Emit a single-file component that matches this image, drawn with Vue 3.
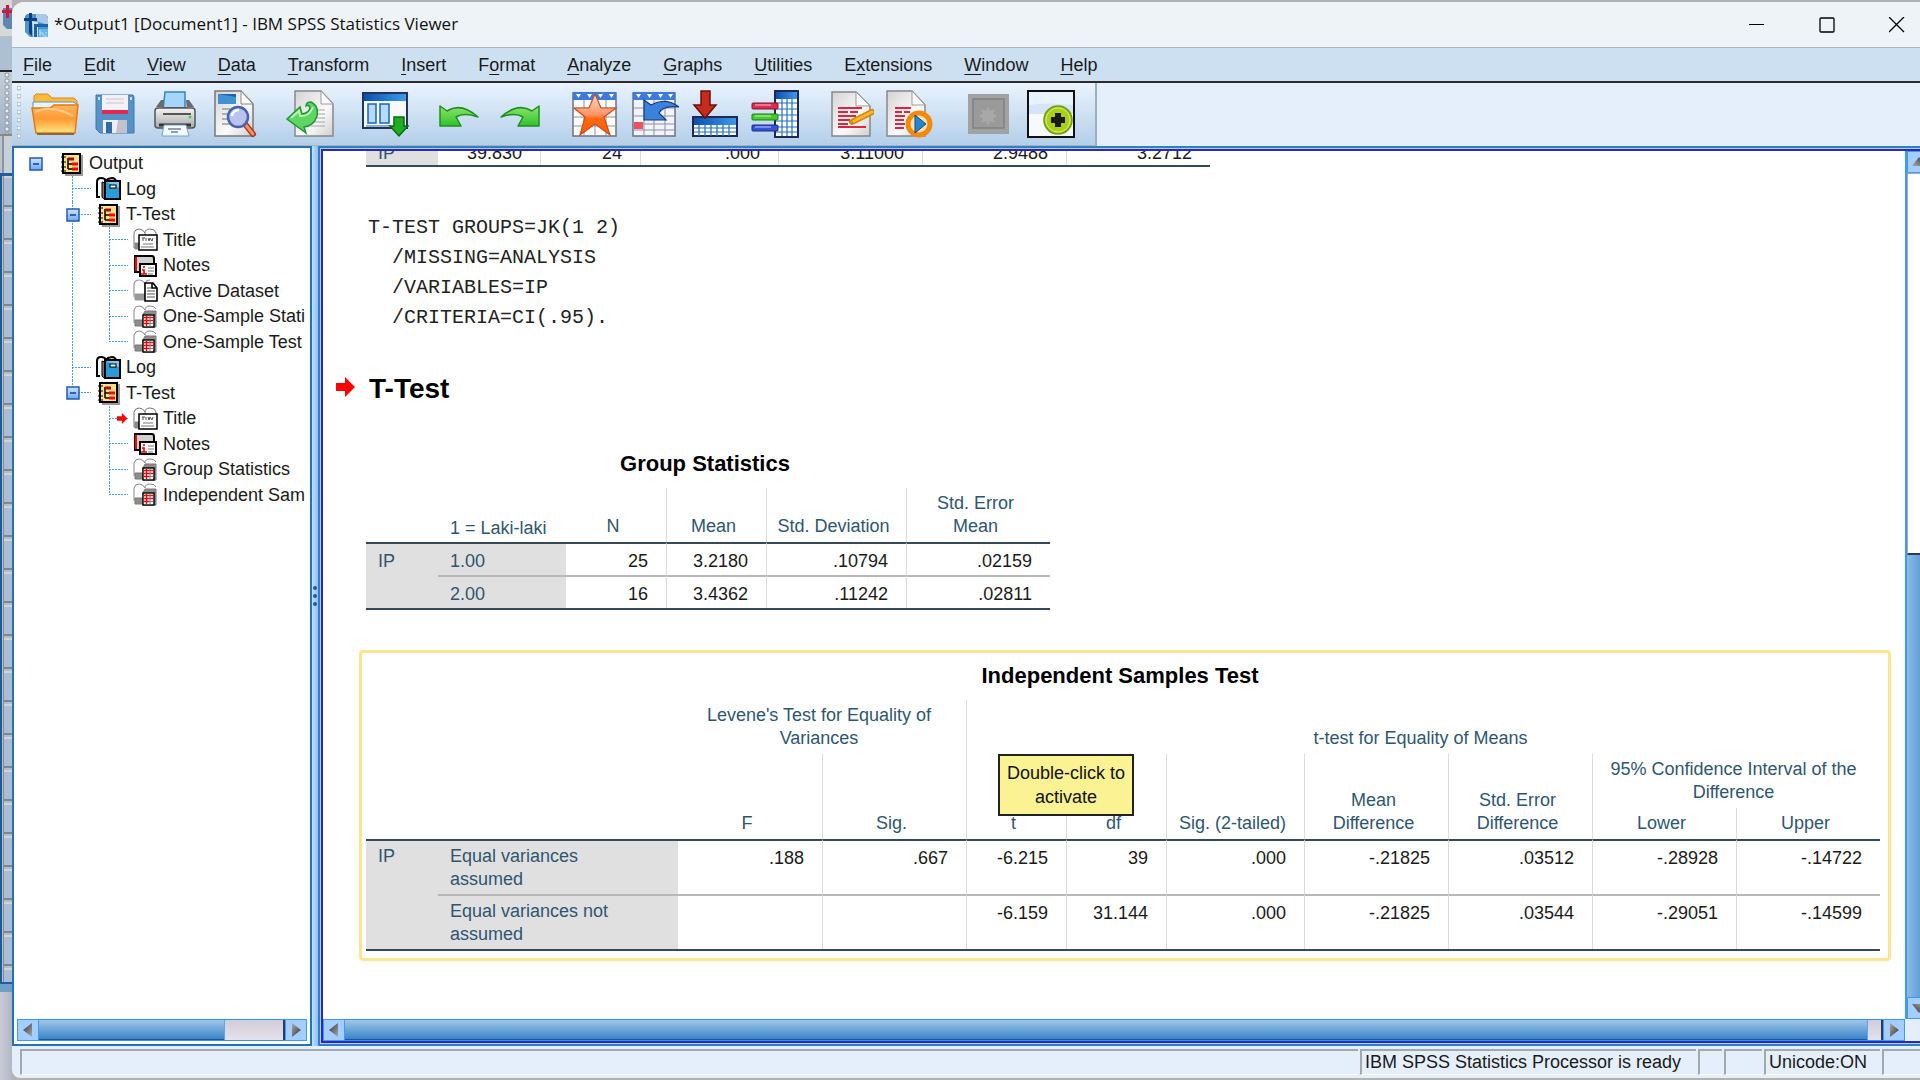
<script setup>
import { ref } from 'vue';

const menus = ref([
  { before: '', key: 'F', after: 'ile' },
  { before: '', key: 'E', after: 'dit' },
  { before: '', key: 'V', after: 'iew' },
  { before: '', key: 'D', after: 'ata' },
  { before: '', key: 'T', after: 'ransform' },
  { before: '', key: 'I', after: 'nsert' },
  { before: 'F', key: 'o', after: 'rmat' },
  { before: '', key: 'A', after: 'nalyze' },
  { before: '', key: 'G', after: 'raphs' },
  { before: '', key: 'U', after: 'tilities' },
  { before: 'E', key: 'x', after: 'tensions' },
  { before: '', key: 'W', after: 'indow' },
  { before: '', key: 'H', after: 'elp' }
]);

// guides: one entry per indent column, drawn left to right
const tree = ref([
  { label: 'Output', icon: 'book', guides: ['root'] },
  { label: 'Log', icon: 'log', guides: ['blank', 'tee'] },
  { label: 'T-Test', icon: 'book', guides: ['blank', 'toggle'] },
  { label: 'Title', icon: 'title', guides: ['blank', 'line', 'tee'] },
  { label: 'Notes', icon: 'notes', guides: ['blank', 'line', 'tee'] },
  { label: 'Active Dataset', icon: 'dataset', guides: ['blank', 'line', 'tee'] },
  { label: 'One-Sample Statistics', icon: 'grid', guides: ['blank', 'line', 'tee'] },
  { label: 'One-Sample Test', icon: 'grid', guides: ['blank', 'line', 'corner'] },
  { label: 'Log', icon: 'log', guides: ['blank', 'tee'] },
  { label: 'T-Test', icon: 'book', guides: ['blank', 'toggle last'] },
  { label: 'Title', icon: 'title', guides: ['blank', 'blank', 'tee current'] },
  { label: 'Notes', icon: 'notes', guides: ['blank', 'blank', 'tee'] },
  { label: 'Group Statistics', icon: 'grid', guides: ['blank', 'blank', 'tee'] },
  { label: 'Independent Samples Test', icon: 'grid', guides: ['blank', 'blank', 'corner'] }
]);

const oneSample = ref(['39.830', '24', '.000', '3.11000', '2.9488', '3.2712']);

const groupRows = ref([
  { group: '1.00', values: ['25', '3.2180', '.10794', '.02159'] },
  { group: '2.00', values: ['16', '3.4362', '.11242', '.02811'] }
]);

const testRows = ref([
  {
    label: 'Equal variances assumed',
    values: ['.188', '.667', '-6.215', '39', '.000', '-.21825', '.03512', '-.28928', '-.14722']
  },
  {
    label: 'Equal variances not assumed',
    values: ['', '', '-6.159', '31.144', '.000', '-.21825', '.03544', '-.29051', '-.14599']
  }
]);

const syntax = `T-TEST GROUPS=JK(1 2)
  /MISSING=ANALYSIS
  /VARIABLES=IP
  /CRITERIA=CI(.95).`;
</script>

<template>
  <div class="desktop">
    <svg class="defs" width="0" height="0" aria-hidden="true">
      <defs>
        <linearGradient id="g-folder" x1="0" y1="0" x2="0" y2="1">
          <stop offset="0" stop-color="#ffb65c" />
          <stop offset="0.5" stop-color="#ff9a33" />
          <stop offset="1" stop-color="#ffe680" />
        </linearGradient>
        <linearGradient id="g-paper" x1="0" y1="0" x2="1" y2="1">
          <stop offset="0" stop-color="#d4d4d4" />
          <stop offset="0.6" stop-color="#fafafa" />
          <stop offset="1" stop-color="#cfcfcf" />
        </linearGradient>
        <linearGradient id="g-blue" x1="0" y1="0" x2="1" y2="0">
          <stop offset="0" stop-color="#0a4fae" />
          <stop offset="1" stop-color="#3d9be8" />
        </linearGradient>
        <linearGradient id="g-green" x1="0" y1="0" x2="0" y2="1">
          <stop offset="0" stop-color="#8fe56b" />
          <stop offset="1" stop-color="#2fc32c" />
        </linearGradient>
        <linearGradient id="g-star" x1="0" y1="0" x2="0" y2="1">
          <stop offset="0" stop-color="#ffe0cc" />
          <stop offset="0.5" stop-color="#ff9566" />
          <stop offset="0.6" stop-color="#ff6a10" />
          <stop offset="1" stop-color="#ff5a00" />
        </linearGradient>
        <linearGradient id="g-toggle" x1="0" y1="0" x2="0" y2="1">
          <stop offset="0" stop-color="#cfe4ff" />
          <stop offset="1" stop-color="#6aaaf0" />
        </linearGradient>
        <linearGradient id="g-printer" x1="0" y1="0" x2="0" y2="1">
          <stop offset="0" stop-color="#f4f4f4" />
          <stop offset="1" stop-color="#a9a9a9" />
        </linearGradient>
        <linearGradient id="g-arrow" x1="0" y1="0" x2="1" y2="1">
          <stop offset="0" stop-color="#333" />
          <stop offset="1" stop-color="#aaa" />
        </linearGradient>
      </defs>
      <symbol id="book" viewBox="0 0 26 24">
        <path d="M6 23h17V3" fill="none" stroke="#9a9a9a" stroke-width="2" />
        <rect x="4" y="2" width="17" height="19" fill="#ffe08a" stroke="#000" stroke-width="2" />
        <path d="M2 5h5M2 10h5M2 15h5M2 19h5" stroke="#000" stroke-width="1" />
        <path d="M9 6v11M9 12h4M9 17h4" fill="none" stroke="#000" stroke-width="1.5" />
        <path d="M9 7h6" stroke="#a01010" stroke-width="3" />
        <path d="M13 12h6M13 17h6" stroke="#f00" stroke-width="3" />
      </symbol>
      <symbol id="log" viewBox="0 0 26 24">
        <path d="M4 20H1V5q0-4 4-4t5 3l2-2 4-1q3 0 4 3" fill="#fff" stroke="#000" stroke-width="2" />
        <path d="M6 5v15q1 2 3 2V6z" fill="#777" stroke="#000" />
        <rect x="9" y="4" width="15" height="18" fill="#2a9bd6" stroke="#000" stroke-width="2" />
        <path d="M10 5h13v6z" fill="#7cc8ee" />
        <rect x="14" y="8" width="6" height="3" fill="#fff" stroke="#000" />
      </symbol>
      <symbol id="title" viewBox="0 0 26 24">
        <path d="M3 20H1V5q1-4 5-4t6 4q0-4 5-4t6 4v3" fill="#fff" stroke="#777" stroke-width="1" />
        <path d="M2 15h4v6H2zM12 5v3" fill="#888" stroke="#888" />
        <rect x="6" y="7" width="18" height="15" fill="#fff" stroke="#000" stroke-width="1.5" />
        <path d="M9 10h3M10 10v3M13 10v3M15 10l1 3 1-3 2 3 1-3" fill="none" stroke="#555" />
        <path d="M10 16h10M8 19h13" stroke="#777" stroke-width="1.2" />
      </symbol>
      <symbol id="notes" viewBox="0 0 26 24">
        <path d="M2 19V2h17q2 0 2 3v7" fill="#d0d0d0" stroke="#000" stroke-width="2" />
        <path d="M3 3v14" stroke="#f00" stroke-width="2" />
        <path d="M2 18h5" stroke="#000" stroke-width="2" />
        <rect x="7" y="10" width="16" height="12" fill="#fff" stroke="#000" stroke-width="2" />
        <path d="M11 12v2M9 16h2v4M8 20h6" fill="none" stroke="#e00" stroke-width="1.6" />
        <path d="M15 14h6M15 17h6M15 20h5" stroke="#777" />
      </symbol>
      <symbol id="dataset" viewBox="0 0 26 24">
        <path d="M1 18V5q1-4 5-4t6 4q1-4 5-4" fill="#fff" stroke="#999" stroke-width="1.2" />
        <path d="M2 15h10v6H2zM12 4v6" fill="#999" stroke="#999" />
        <path d="M12 4h8l4 5v13H12z" fill="#fff" stroke="#000" stroke-width="1.6" />
        <path d="M19 4v5h5" fill="none" stroke="#000" stroke-width="1.6" />
        <path d="M14 9h4M14 12h8M14 15h8M14 18h8" stroke="#555" />
      </symbol>
      <symbol id="grid" viewBox="0 0 26 24">
        <path d="M1 18V5q1-4 5-4t6 4q0-4 5-4t6 3" fill="#fff" stroke="#888" />
        <path d="M2 15h8v6H2zM12 6h11v16H10V10z" fill="#8d8d8d" stroke="#777" />
        <rect x="10" y="10" width="11" height="12" fill="#fff" stroke="#000" stroke-width="1.4" />
        <path d="M11 12.500h9M11 15.500h9M11 18.500h5M13.500 11v10" stroke="#f00" stroke-width="1.4" />
        <path d="M17 11v10M16 18.500h4" stroke="#777" />
      </symbol>
      <symbol id="arrow" viewBox="0 0 20 20">
        <path d="M0 6h9V0l10 10-10 10v-6H0z" fill="#f00" />
      </symbol>
      <symbol id="tri" viewBox="0 0 12 14">
        <path d="M10 0v14L1 7z" fill="url(#g-arrow)" />
      </symbol>
    </svg>

    <!-- sliver of the data editor behind this window -->
    <div class="behind">
      <div class="behind-title">
        <svg viewBox="0 0 12 36">
          <path d="M3 8h9v21H7l-4-4z" fill="#5b88b5" />
          <path d="M2 10h10v3H2zM6 5h3v13H6z" fill="#d3143c" />
        </svg>
      </div>
      <div class="behind-menu"></div>
      <div class="behind-tools"></div>
      <div class="behind-input"></div>
      <div class="behind-rows"></div>
      <div class="behind-bar"></div>
      <div class="behind-foot"></div>
    </div>

    <div class="window">
      <header class="titlebar">
        <svg class="app-icon" viewBox="0 0 24 24" aria-hidden="true">
          <path d="M3 1h18l3 3v20H6L1 19V3z" fill="#4f93cc" />
          <path d="M12 1h9l3 4v7L12 8z" fill="#a9c9e6" />
          <path d="M5 0h3v5h5v3H8v15l-3-3V8H0V5h5z" fill="#0c3f83" />
          <path d="M8 8l6 1v15H9z" fill="#cfe2f2" />
          <path d="M10 11h14v3H13v10h-3z" fill="#1d63a8" />
          <path d="M15 16h9v8h-9z" fill="#66b6ee" />
          <path d="M16 17v6M16 20h3v3M21 20h2M20 23h3" fill="none" stroke="#bfe2fa" />
        </svg>
        <h1>*Output1 [Document1] - IBM SPSS Statistics Viewer</h1>
        <div class="window-buttons">
          <button aria-label="Minimize">
            <svg viewBox="0 0 16 16"><path d="M0 7.500h15" stroke="#000" /></svg>
          </button>
          <button aria-label="Maximize">
            <svg viewBox="0 0 16 16">
              <rect x="1" y="1" width="14" height="14" rx="1" fill="none" stroke="#000" stroke-width="1.3" />
            </svg>
          </button>
          <button aria-label="Close">
            <svg viewBox="0 0 16 16"><path d="M0 0l15 15M15 0L0 15" stroke="#000" stroke-width="1.3" /></svg>
          </button>
        </div>
      </header>

      <nav class="menubar">
        <button v-for="(menu, index) in menus" :key="index">{{ menu.before }}<u>{{ menu.key }}</u>{{ menu.after }}</button>
      </nav>

      <div class="toolbar-row">
        <div class="toolbar">
          <div class="grip"></div>
          <div class="group">
            <button aria-label="Open">
              <svg viewBox="0 0 48 48">
                <path d="M3 14V6l2-2h12l4 4h22l3 3v8H3z" fill="#ffb938" stroke="#d98a1d" />
                <path d="M2 12h40l4 2v6H2z" fill="#e9f5ff" stroke="#4d9be0" />
                <path d="M1 18h18l4-3h24l-3 28H5z" fill="url(#g-folder)" stroke="#e8780a" stroke-width="1.5" />
                <path d="M4 22q16-8 38 4" fill="none" stroke="#ffc98a" stroke-width="2" />
                <path d="M6 44h37" stroke="#8a6a3c" stroke-width="2" />
              </svg>
            </button>
            <button aria-label="Save">
              <svg viewBox="0 0 48 48">
                <path d="M5 5h37l1 2v36H9l-4-4z" fill="#5592c6" stroke="#3c78ad" />
                <rect x="11" y="5" width="26" height="19" fill="#f3f1f6" />
                <path d="M15 9h18M15 13h18" stroke="#c9c5cf" />
                <rect x="11" y="20" width="26" height="4" fill="#e02850" />
                <rect x="12" y="30" width="24" height="13" fill="#f0eef4" />
                <rect x="15" y="32" width="6" height="11" fill="#2e6ca3" />
                <path d="M27 30h9v13H25z" fill="#c3c1cb" />
                <rect x="7" y="7" width="2" height="3" fill="#c5ddf2" />
                <rect x="39" y="7" width="2" height="3" fill="#c5ddf2" />
              </svg>
            </button>
            <button aria-label="Print">
              <svg viewBox="0 0 48 48">
                <path d="M14 2h20v18H12z" fill="#a5d5f8" stroke="#2c86cc" stroke-width="1.5" />
                <path d="M5 17l5-7h3l-1 9h24l-1-9h3l5 7z" fill="#6a6a6a" />
                <rect x="4" y="18" width="40" height="20" rx="3" fill="url(#g-printer)" stroke="#555" stroke-width="1.5" />
                <path d="M12 24h28" stroke="#555" stroke-width="2" />
                <circle cx="39" cy="27" r="1.500" fill="#3fd13a" />
                <path d="M8 35h32" stroke="#333" stroke-width="3" />
                <path d="M13 35h22l3 11H11z" fill="#f4faff" stroke="#6fa3cf" />
                <path d="M17 39h13M20 42h7" stroke="#6e8296" stroke-width="1.500" />
              </svg>
            </button>
            <button aria-label="Print preview">
              <svg viewBox="0 0 48 48">
                <path d="M4 1h26l12 13v32H4z" fill="url(#g-paper)" stroke="#777" stroke-width="1.5" />
                <path d="M7 4h18v10H7z" fill="#3f93d4" />
                <path d="M7 4h18v3z" fill="#1f63ad" />
                <path d="M30 1v13h12z" fill="#fff" stroke="#888" />
                <path d="M11 19h8M11 24h6M11 29h6M11 34h10" stroke="#9a9a9a" stroke-width="1.5" />
                <path d="M34 34l8 10" stroke="#a8361c" stroke-width="6" stroke-linecap="round" />
                <path d="M34 34l8 10" stroke="#f09066" stroke-width="3" stroke-linecap="round" />
                <circle cx="27" cy="27" r="10" fill="#b9c4ee" stroke="#4763b0" stroke-width="2.5" />
                <path d="M21 26q1-6 7-6" fill="none" stroke="#fff" stroke-width="2.500" />
              </svg>
            </button>
          </div>
          <div class="group">
            <button aria-label="Export">
              <svg viewBox="0 0 48 48">
                <path d="M9 1h26l12 13v32H9z" fill="url(#g-paper)" stroke="#888" stroke-width="1.5" />
                <path d="M35 1v13h12z" fill="#fff" stroke="#999" />
                <path d="M30 20h9M30 24h9M28 28h11M26 32h13M24 36h15" stroke="#a5a5a5" />
                <path d="M25 12q8 4 6 14-3 10-13 11l2 6L1 29l13-12 2 7q7-1 8-6-1-4-4-2 0-4 5-4z" fill="#5fd562" stroke="#23963a" stroke-width="1.5" />
                <path d="M5 28l8-7 1 5q9 1 13-9" fill="none" stroke="#b8f5b0" stroke-width="2" />
              </svg>
            </button>
          </div>
          <div class="group">
            <button aria-label="Recall dialog">
              <svg viewBox="0 0 48 48">
                <rect x="2" y="3" width="44" height="35" fill="#f6faff" stroke="#22335e" stroke-width="2" />
                <rect x="3" y="4" width="42" height="7" fill="url(#g-blue)" />
                <rect x="7" y="14" width="8" height="19" fill="#b5dbfa" stroke="#1d64b8" stroke-width="1.5" />
                <rect x="19" y="14" width="9" height="19" fill="#b5dbfa" stroke="#1d64b8" stroke-width="1.5" />
                <path d="M5 36h25" stroke="#1d64b8" />
                <path d="M33 27h10v9h4L38 46l-9-10h4z" fill="#1fae1f" stroke="#0a6a10" stroke-width="1.500" />
              </svg>
            </button>
          </div>
          <div class="group">
            <button aria-label="Undo">
              <svg viewBox="0 0 48 48">
                <path d="M4 16l7 5q14-9 31 6-14-5-22 0l5 9H4z" fill="url(#g-green)" stroke="#1c8f1e" stroke-width="1.5" stroke-linejoin="round" />
              </svg>
            </button>
            <button aria-label="Redo">
              <svg viewBox="0 0 48 48">
                <path d="M43 16l-7 5q-14-9-31 6 14-5 22 0l-5 9h21z" fill="url(#g-green)" stroke="#1c8f1e" stroke-width="1.5" stroke-linejoin="round" />
              </svg>
            </button>
          </div>
          <div class="group">
            <button aria-label="Go to data">
              <svg viewBox="0 0 48 48">
                <rect x="2" y="3" width="43" height="43" fill="#fff" stroke="#6e7282" stroke-width="1.5" />
                <rect x="2" y="2" width="43" height="8" fill="#3f78de" />
                <path d="M5 4h5l-2.500 4zM16 4h5l-2.500 4zM27 4h5l-2.500 4zM38 4h5l-2.500 4z" fill="#fff" />
                <path d="M13 10v36M24 10v36M35 10v36M2 18h43M2 27h43M2 36h43" stroke="#8d91a0" />
                <path d="M24 4l6 14h15L33 27l6 18-15-11L9 45l5-18L3 18h15z" fill="url(#g-star)" stroke="#cf4a1c" stroke-width="1.2" />
              </svg>
            </button>
            <button aria-label="Go to case">
              <svg viewBox="0 0 48 48">
                <rect x="2" y="3" width="42" height="43" fill="#f2f4fc" stroke="#6e7282" stroke-width="1.5" />
                <rect x="2" y="2" width="42" height="8" fill="#3f78de" />
                <path d="M5 4h5l-2.500 4zM16 4h5l-2.500 4zM27 4h5l-2.500 4zM37 4h5l-2.500 4z" fill="#fff" />
                <path d="M13 10v36M23 10v36M34 10v36M2 18h42M2 26h42M2 34h42M2 40h42" stroke="#8d91a0" />
                <rect x="3" y="32" width="9" height="7" fill="#ee5164" />
                <path d="M13 10l7 5q14-8 28 2-16-2-20 6l7 7H13z" fill="#3b82dd" stroke="#123b82" stroke-width="1.2" />
              </svg>
            </button>
            <button aria-label="Insert cases">
              <svg viewBox="0 0 48 48">
                <rect x="2" y="27" width="44" height="19" fill="#fff" stroke="#1e2a55" stroke-width="2" />
                <rect x="3" y="28" width="42" height="7" fill="url(#g-blue)" />
                <path d="M8 35v11M14 35v11M20 35v11M26 35v11M32 35v11M38 35v11M3 38h42M3 42h42" stroke="#1b6fc2" stroke-width="1.2" />
                <path d="M10 1h9v14h6L14 28 3 15h7z" fill="#c72a1e" stroke="#6d1009" stroke-width="1.5" />
              </svg>
            </button>
            <button aria-label="Variables">
              <svg viewBox="0 0 48 48">
                <rect x="24" y="1" width="23" height="46" fill="#fff" stroke="#1e2a55" stroke-width="2" />
                <rect x="25" y="2" width="21" height="7" fill="url(#g-blue)" />
                <path d="M31 9v37M36 9v37M41 9v37M25 13h21M25 19h21M25 25h21M25 31h21M25 37h21M25 42h21" stroke="#1b6fc2" stroke-width="1.2" />
                <rect x="1" y="13" width="26" height="6" rx="1" fill="#e02c50" stroke="#7a1630" />
                <rect x="1" y="24" width="26" height="6" rx="1" fill="#44cc2a" stroke="#1e7a12" />
                <rect x="1" y="35" width="26" height="6" rx="1" fill="#3355d8" stroke="#1a2a80" />
                <path d="M4 15h16M4 26h16M4 37h16" stroke="#fff" opacity="0.7" />
              </svg>
            </button>
          </div>
          <div class="group">
            <button aria-label="New script">
              <svg viewBox="0 0 48 48">
                <path d="M6 2h24l14 14v30H6z" fill="url(#g-paper)" stroke="#888" stroke-width="1.5" />
                <path d="M30 2v14h14z" fill="#fff" stroke="#999" />
                <path d="M12 18h24M12 22h10M24 22h8M12 26h18M12 30h12M12 34h10M12 37h28" stroke="#e0243e" stroke-width="1.8" />
                <path d="M26 32L46 22" stroke="#d9860b" stroke-width="6" stroke-linecap="round" />
                <path d="M28 31L46 22" stroke="#ffb733" stroke-width="3" stroke-linecap="round" />
              </svg>
            </button>
            <button aria-label="Run script">
              <svg viewBox="0 0 48 48">
                <path d="M1 1h25l13 14v31H1z" fill="url(#g-paper)" stroke="#888" stroke-width="1.5" />
                <path d="M26 1v14h13z" fill="#fff" stroke="#999" />
                <path d="M9 18h16M9 22h7M18 22h6M9 26h10M9 30h9M9 34h10M9 38h9" stroke="#e0243e" stroke-width="1.8" />
                <circle cx="33" cy="34" r="11" fill="#ffe0b0" stroke="#f58a0a" stroke-width="5" />
                <path d="M29 25l11 9-11 9z" fill="#2486cc" stroke="#0d4f86" />
              </svg>
            </button>
          </div>
          <div class="group last">
            <button aria-label="Designate window" disabled>
              <svg viewBox="0 0 48 48">
                <rect x="5" y="4" width="41" height="40" fill="#a2a2a2" />
                <rect x="10" y="9" width="31" height="29" fill="#9a9a9a" stroke="#808080" stroke-width="1.5" />
                <path d="M25 16l2 5 5-2-2 5 5 2-5 2 2 5-5-2-2 5-2-5-5 2 2-5-5-2 5-2-2-5 5 2z" fill="#a8a8a8" />
              </svg>
            </button>
            <button aria-label="Add to viewer">
              <svg viewBox="0 0 48 48">
                <rect x="1" y="1" width="46" height="46" fill="#f6faff" stroke="#111" stroke-width="2" />
                <path d="M2 2h44v22H2z" fill="#d3e5f7" />
                <path d="M2 2h44v13Q20 12 2 15z" fill="#e9f3fd" />
                <circle cx="31" cy="30" r="14" fill="#a9cf1a" stroke="#6f9a12" stroke-width="1.5" />
                <circle cx="31" cy="30" r="12" fill="none" stroke="#d5ee6a" />
                <path d="M28 23h6v4h4v6h-4v4h-6v-4h-4v-6h4z" fill="#1a1a1a" />
              </svg>
            </button>
          </div>
        </div>
      </div>

      <main class="viewer">
        <aside class="outline">
          <ul class="tree">
            <li v-for="(node, index) in tree" :key="index">
              <span v-for="(guide, g) in node.guides" :key="g" class="guide" :class="guide">
                <button v-if="guide.startsWith('toggle') || guide === 'root'" class="collapse" aria-label="Collapse">
                  <svg viewBox="0 0 14 14">
                    <rect x="1" y="1" width="12" height="12" fill="url(#g-toggle)" stroke="#2459b8" stroke-width="1.500" />
                    <path d="M4 7h6" stroke="#123f94" stroke-width="1.500" />
                  </svg>
                </button>
                <svg v-if="guide.includes('current')" class="marker" viewBox="0 0 20 20"><use href="#arrow" /></svg>
              </span>
              <svg class="node-icon"><use :href="'#' + node.icon" /></svg>
              <span class="label">{{ node.label }}</span>
            </li>
          </ul>
          <div class="scroll-x">
            <button aria-label="Scroll outline left"><svg><use href="#tri" /></svg></button>
            <div class="track"><div class="thumb"></div></div>
            <button class="flip" aria-label="Scroll outline right"><svg><use href="#tri" /></svg></button>
          </div>
        </aside>

        <div class="splitter"><i></i><i></i><i></i></div>

        <section class="output">
          <div class="output-inner">
            <div class="document">
              <table class="pivot one-sample">
                <colgroup>
                  <col class="w72" /><col class="w102" /><col class="w100" /><col class="w138" />
                  <col class="w144" /><col class="w144" /><col class="w144" />
                </colgroup>
                <tbody>
                  <tr>
                    <th class="side" scope="row">IP</th>
                    <td v-for="(value, index) in oneSample" :key="index">{{ value }}</td>
                  </tr>
                </tbody>
              </table>

              <pre class="syntax">{{ syntax }}</pre>

              <div class="heading">
                <svg viewBox="0 0 20 20"><use href="#arrow" /></svg>
                <h2>T-Test</h2>
              </div>

              <table class="pivot group-stats">
                <caption>Group Statistics</caption>
                <colgroup>
                  <col class="w72" /><col class="w128" /><col class="w100" /><col class="w100" />
                  <col class="w140" /><col class="w144" />
                </colgroup>
                <thead>
                  <tr>
                    <td class="empty"></td>
                    <th class="stub" scope="col">1 = Laki-laki</th>
                    <th scope="col">N</th>
                    <th scope="col">Mean</th>
                    <th scope="col">Std. Deviation</th>
                    <th scope="col">Std. Error<br />Mean</th>
                  </tr>
                </thead>
                <tbody>
                  <tr v-for="(row, index) in groupRows" :key="row.group">
                    <th v-if="index === 0" class="side" rowspan="2" scope="rowgroup">IP</th>
                    <th class="side" scope="row">{{ row.group }}</th>
                    <td v-for="(value, v) in row.values" :key="v">{{ value }}</td>
                  </tr>
                </tbody>
              </table>

              <div class="selected">
                <table class="pivot test">
                  <caption>Independent Samples Test</caption>
                  <colgroup>
                    <col class="w72" /><col class="w240" /><col class="w144" /><col class="w144" />
                    <col class="w100" /><col class="w100" /><col class="w138" /><col class="w144" />
                    <col class="w144" /><col class="w144" /><col class="w144" />
                  </colgroup>
                  <thead>
                    <tr class="tall">
                      <td class="empty" colspan="2" rowspan="3"></td>
                      <th colspan="2" scope="colgroup">Levene's Test for Equality of<br />Variances</th>
                      <th colspan="7" scope="colgroup">t-test for Equality of Means</th>
                    </tr>
                    <tr class="tall">
                      <th class="first" rowspan="2" scope="col">F</th>
                      <th rowspan="2" scope="col">Sig.</th>
                      <th rowspan="2" scope="col">t</th>
                      <th rowspan="2" scope="col">df</th>
                      <th rowspan="2" scope="col">Sig. (2-tailed)</th>
                      <th rowspan="2" scope="col">Mean<br />Difference</th>
                      <th rowspan="2" scope="col">Std. Error<br />Difference</th>
                      <th colspan="2" scope="colgroup">95% Confidence Interval of the<br />Difference</th>
                    </tr>
                    <tr class="short">
                      <th scope="col">Lower</th>
                      <th scope="col">Upper</th>
                    </tr>
                  </thead>
                  <tbody>
                    <tr v-for="(row, index) in testRows" :key="row.label">
                      <th v-if="index === 0" class="side" rowspan="2" scope="rowgroup">IP</th>
                      <th class="side" scope="row">{{ row.label }}</th>
                      <td v-for="(value, v) in row.values" :key="v">{{ value }}</td>
                    </tr>
                  </tbody>
                </table>
                <div class="tooltip" role="tooltip">Double-click to activate</div>
              </div>
            </div>

            <div class="scroll-y">
              <button class="up" aria-label="Scroll up"><svg><use href="#tri" /></svg></button>
              <div class="track-y"><div class="thumb-y"></div></div>
              <button class="down" aria-label="Scroll down"><svg><use href="#tri" /></svg></button>
            </div>

            <div class="scroll-x wide">
              <button aria-label="Scroll left"><svg><use href="#tri" /></svg></button>
              <div class="track"><div class="thumb"></div></div>
              <button class="flip" aria-label="Scroll right"><svg><use href="#tri" /></svg></button>
            </div>
            <div class="scroll-corner"></div>
          </div>
        </section>
      </main>

      <footer class="status">
        <span class="grow"></span>
        <span class="message">IBM SPSS Statistics Processor is ready</span>
        <span class="small"></span>
        <span class="medium"></span>
        <span class="encoding">Unicode:ON</span>
        <span class="medium"></span>
      </footer>
    </div>
  </div>
</template>

<style>
body {
  margin: 0;
  overflow: hidden;
}
</style>

<style scoped>
.desktop {
  display: flex;
  height: 100vh;
  background: #b2b2b2;
  font-family: 'Liberation Sans', Arial, sans-serif;
  font-size: 18px;
  color: #1a1a1a;
  overflow: hidden;
}

.defs {
  position: absolute;
}

button {
  padding: 0;
  border: 0;
  background: none;
  font: inherit;
  color: inherit;
}

svg {
  display: block;
}

/* ===== WINDOW BEHIND ===== */
.behind {
  flex: 0 0 12px;
  display: flex;
  flex-direction: column;
  background: #b9c4d0;
}

.behind-title {
  height: 36px;
  background: #d8d8d8;
}

.behind-title svg {
  width: 12px;
  height: 36px;
}

.behind-menu {
  height: 34px;
  background: #adc0d3;
  border-bottom: 2px solid #222;
}

.behind-tools {
  height: 62px;
  background: radial-gradient(circle at 7px 3px, #eee 0 1px, #8d99a6 2px, transparent 3px) 0 0 / 12px 6px, linear-gradient(#c4ced8, #9fb2c6);
  border-bottom: 2px solid #888;
}

.behind-input {
  height: 37px;
  margin-left: 2px;
  border-left: 2px solid #8c959e;
  background: #c8d0d8;
}

.behind-rows {
  flex: 1;
  border-top: 3px solid #1f5fa0;
  border-left: 2px solid #1b5a9c;
  background:
    linear-gradient(90deg, #b8c0c8 0 1px, #858c96 1px 2px, transparent 2px),
    repeating-linear-gradient(#d0d4d6 0 2px, #aabdd3 2px 29px, #7d8794 29px 31px, #b4bcc4 31px 33px);
}

.behind-bar {
  height: 8px;
  border-top: 2px solid #1f5fa0;
  background: #6f9fc8;
}

.behind-foot {
  height: 88px;
  background: linear-gradient(90deg, #c9ccd6, #b3b6c4);
}

/* ===== TITLE AND MENU ===== */
.window {
  flex: 1;
  min-width: 0;
  display: flex;
  flex-direction: column;
  margin: 2px 0;
  background: #e4effb;
  border-radius: 12px 0 0 8px;
  overflow: hidden;
}

.titlebar {
  flex: 0 0 45px;
  display: flex;
  align-items: center;
  padding-left: 12px;
  background: #eef3f7;
  border-bottom: 1px solid #a9b6c4;
}

.app-icon {
  width: 24px;
  height: 24px;
}

.titlebar h1 {
  flex: 1;
  margin: 0 0 2px 6px;
  font: 400 17px 'Open Sans', sans-serif;
  color: #111;
}

.window-buttons {
  display: flex;
  gap: 24px;
}

.window-buttons button {
  width: 46px;
  height: 44px;
  display: grid;
  place-items: center;
}

.window-buttons svg {
  width: 16px;
  height: 16px;
}

.menubar {
  flex: 0 0 33px;
  display: flex;
  align-items: center;
  gap: 32px;
  padding-left: 11px;
  background: #cde0f2;
  border-bottom: 2px solid #2b2b2b;
}

.menubar button {
  line-height: 24px;
}

.menubar u {
  text-underline-offset: 3px;
}

/* ===== TOOLBAR ===== */
.toolbar-row {
  flex: 0 0 63px;
  display: flex;
  background: #e4effb;
}

.toolbar {
  display: flex;
  align-items: center;
  gap: 27px;
  padding: 0 20px 0 5px;
  background: linear-gradient(#eaf3fd, #b3cfe9);
  border-right: 2px solid #9db0c2;
  border-bottom: 1px solid #a9b3bd;
}

.grip {
  width: 4px;
  height: 56px;
  margin-right: -17px;
  background: radial-gradient(circle at 2px 2px, #fff 0 1px, #9eb0c2 2px, transparent 3px) 0 0 / 4px 8px;
}

.group {
  display: flex;
  gap: 12px;
}

.group.last {
  gap: 16px;
  padding-left: 2px;
}

.group svg {
  width: 48px;
  height: 48px;
}

/* ===== OUTLINE ===== */
.viewer {
  flex: 1;
  min-height: 0;
  display: flex;
}

.outline {
  flex: 0 0 296px;
  min-width: 0;
  display: flex;
  flex-direction: column;
  border: 2px solid #2472b8;
  background: #fff;
  overflow: hidden;
}

.tree {
  flex: 1;
  margin: 3px 0 0;
  padding: 0 5px 0 3px;
  list-style: none;
  overflow: hidden;
}

.tree li {
  display: flex;
  align-items: center;
  height: 25px;
  overflow: hidden;
}

.tree li:nth-child(even) {
  height: 26px;
}

.guide {
  flex: 0 0 37px;
  align-self: stretch;
  display: grid;
  place-items: center;
  --dots-y: repeating-linear-gradient(#4a9af0 0 2px, #fff 2px 3px);
  --dots-x: repeating-linear-gradient(90deg, #4a9af0 0 2px, #fff 2px 3px);
  background-repeat: no-repeat;
}

.line {
  background-image: var(--dots-y);
  background-size: 1px 100%;
  background-position: 18px 0;
}

.tee,
.toggle {
  background-image: var(--dots-y), var(--dots-x);
  background-size: 1px 100%, 19px 1px;
  background-position: 18px 0, 18px 12px;
}

.corner,
.toggle.last {
  background-image: var(--dots-y), var(--dots-x);
  background-size: 1px 13px, 19px 1px;
  background-position: 18px 0, 18px 12px;
}

.collapse,
.collapse svg {
  width: 14px;
  height: 14px;
}

.marker {
  justify-self: end;
  width: 11px;
  height: 11px;
}

.node-icon {
  flex: 0 0 26px;
  height: 24px;
  margin-left: 5px;
}

.label {
  margin-left: 4px;
  white-space: nowrap;
}

.splitter {
  flex: 0 0 6px;
  display: flex;
  flex-direction: column;
  align-items: center;
  justify-content: center;
  gap: 4px;
  background: linear-gradient(90deg, #bfe0ff, #8fbdf5);
}

.splitter i {
  width: 4px;
  height: 4px;
  border-radius: 2px;
  background: #2a5a9c;
}

/* ===== SCROLLBARS ===== */
.scroll-x {
  display: flex;
  height: 22px;
  margin: 0 3px 3px;
  background: linear-gradient(#a6cbed, #6aa4d8 50%, #2f7dc2);
  box-shadow: inset 0 0 0 1px #3592ea, inset 0 -2px 0 #17589c;
}

.scroll-x.wide {
  margin: 0;
}

.scroll-x button,
.scroll-y button {
  flex: 0 0 22px;
  display: grid;
  place-items: center;
  background: #a4ceff;
  border: 1px solid #3f9bf2;
}

.scroll-x svg,
.scroll-y svg {
  width: 12px;
  height: 14px;
}

.flip svg {
  transform: rotate(180deg);
}

.track {
  flex: 1;
  display: flex;
  justify-content: flex-end;
  padding: 1px 0;
}

.thumb {
  width: 58px;
  background: linear-gradient(#cfcddb, #e6e1ea);
  border-left: 1px solid #5aa6f2;
  border-right: 2px solid #2c3a66;
}

.wide .thumb {
  width: 13px;
}

.scroll-y {
  display: flex;
  flex-direction: column;
  overflow: hidden;
  border-left: 2px solid #3f9bf2;
}

.scroll-y button,
.track-y {
  width: 24px;
}

.up svg {
  transform: rotate(90deg);
}

.down svg {
  transform: rotate(-90deg);
}

.track-y {
  flex: 1;
  background: linear-gradient(90deg, #8bbbe8, #4287c8);
}

.thumb-y {
  height: 46%;
  background: #fff;
  border: 1px solid #a8a8b4;
  border-bottom: 2px solid #2c3a66;
}

.scroll-corner {
  background: #e4effb;
}

/* ===== OUTPUT DOCUMENT ===== */
.output {
  flex: 1;
  min-width: 0;
  display: flex;
  padding: 1px 0 1px 1px;
  border: 2px solid #2f7fc3;
  border-right: 0;
  background: #b9c8f0;
}

.output-inner {
  flex: 1;
  min-width: 0;
  display: grid;
  grid-template-columns: minmax(0, 1fr) 15px;
  grid-template-rows: minmax(0, 1fr) 22px;
  border: 2px solid #2a2ab8;
  border-right: 0;
  background: #fff;
}

.document {
  overflow: hidden;
}

.pivot {
  margin-left: 43px;
  table-layout: fixed;
  width: 0;
  border-collapse: separate;
  border-spacing: 0;
  line-height: 23px;
  border-bottom: 2px solid #34495a;
}

.pivot caption {
  padding: 0 6px 11px 0;
  font-size: 22px;
  font-weight: 700;
  line-height: 26px;
  color: #000;
  white-space: nowrap;
}

.pivot th {
  font-weight: 400;
  color: #2f5670;
}

.pivot thead th {
  padding: 0 6px 4px 0;
  vertical-align: bottom;
  border-left: 1px solid #dcdcdc;
  white-space: nowrap;
}

.pivot thead .stub {
  padding: 0 0 2px 12px;
  text-align: left;
}

.pivot .stub,
.pivot .stub + th,
.pivot .empty + th,
.pivot thead .first {
  border-left: 0;
}

.pivot tbody tr:first-child > * {
  border-top: 2px solid #34495a;
}

.pivot tbody td {
  padding: 6px 18px 2px 0;
  text-align: right;
  vertical-align: top;
  border-left: 1px solid #dcdcdc;
}

.pivot tbody .side {
  padding: 6px 12px 2px;
  text-align: left;
  vertical-align: top;
  background: #e0e0e0;
}

.pivot tbody tr + tr > * {
  border-top: 2px solid #b8b8b8;
}

.pivot tbody .side + td {
  border-left: 0;
}

.one-sample {
  margin-top: -19px;
}

.pivot.one-sample tbody tr > * {
  padding-top: 8px;
  padding-bottom: 0;
}

.group-stats {
  margin-top: 46px;
}

.group-stats thead tr {
  height: 54px;
}

.test {
  margin-left: 0;
}

.test .tall {
  height: 54px;
}

.test .short {
  height: 31px;
}

.test tbody .side {
  padding-top: 4px;
  padding-bottom: 3px;
}

.test tbody .side + .side {
  padding-right: 50px;
}

.w72 {
  width: 72px;
}

.w100 {
  width: 100px;
}

.w102 {
  width: 102px;
}

.w128 {
  width: 128px;
}

.w138 {
  width: 138px;
}

.w140 {
  width: 140px;
}

.w144 {
  width: 144px;
}

.w240 {
  width: 240px;
}

.syntax {
  margin: 46px 0 0 45px;
  font-family: 'Liberation Mono', 'Courier New', monospace;
  font-size: 20px;
  line-height: 30px;
  color: #222;
}

.heading {
  display: flex;
  align-items: center;
  gap: 13px;
  margin: 40px 0 0 13px;
}

.heading svg {
  width: 20px;
  height: 20px;
  margin-bottom: 4px;
}

.heading h2 {
  margin: 0;
  font-size: 28px;
  line-height: 32px;
  color: #000;
}

.selected {
  position: relative;
  width: max-content;
  margin: 40px 0 0 36px;
  padding: 10px 8px 7px 4px;
  border: 3px solid #ffe58f;
  border-radius: 4px;
}

.tooltip {
  position: absolute;
  top: 101px;
  left: 636px;
  width: 120px;
  padding: 5px 6px;
  border: 2px solid #222;
  background: #faf293;
  line-height: 24px;
  text-align: center;
  color: #111;
}

/* ===== STATUS BAR ===== */
.status {
  flex: 0 0 32px;
  display: flex;
  gap: 2px;
  box-sizing: border-box;
  padding: 3px 0 3px 8px;
}

.status span {
  box-sizing: border-box;
  padding: 0 10px 0 3px;
  border-top: 2px solid #a3a8ad;
  border-left: 2px solid #a3a8ad;
  border-bottom: 1px solid #fff;
  line-height: 23px;
  white-space: nowrap;
}

.status .grow {
  flex: 1;
}

.status .message {
  width: 336px;
}

.status .small {
  width: 24px;
}

.status .medium {
  width: 38px;
}

.status .encoding {
  width: 116px;
}
</style>
